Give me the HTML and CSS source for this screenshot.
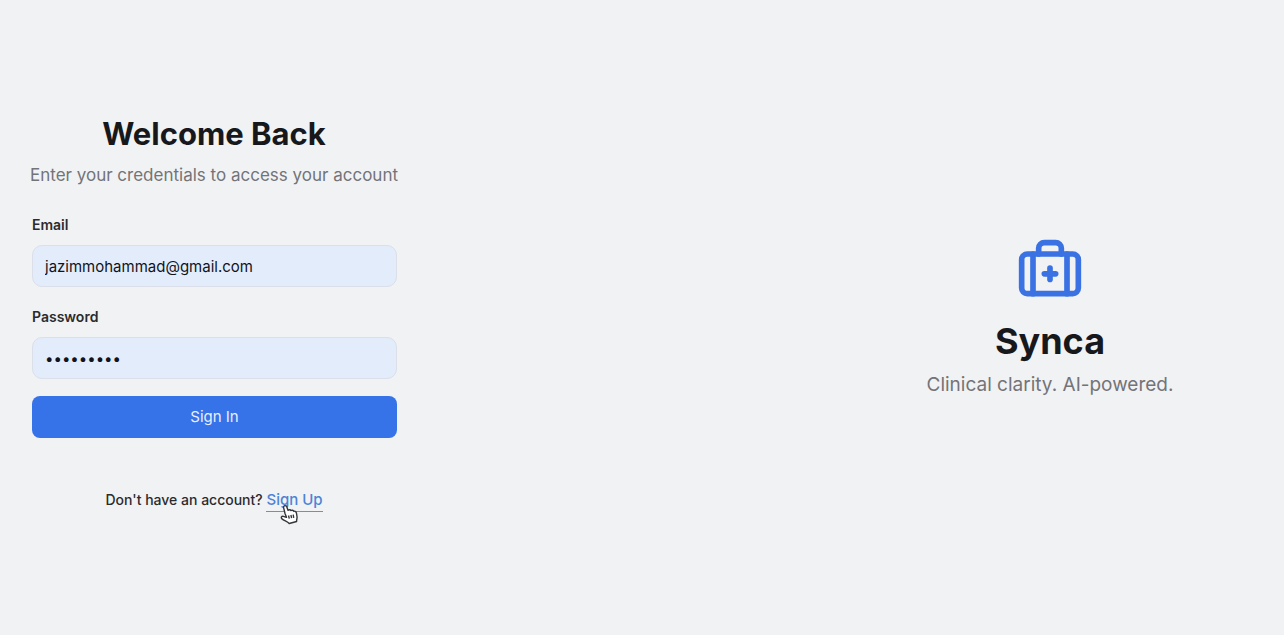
FILE: index.html
```
<!DOCTYPE html>
<html lang="en">
<head>
    <meta charset="UTF-8">
    <meta name="viewport" content="width=device-width, initial-scale=1.0">
    <title>Synca - Sign In</title>
    <link rel="stylesheet" href="styles.css">
</head>
<body>
    <main class="page">
        <section class="login">
            <h1 class="login-title">Welcome Back</h1>
            <p class="login-subtitle">Enter your credentials to access your account</p>
            <form class="login-form">
                <div class="field">
                    <label for="email">Email</label>
                    <input type="email" id="email" value="jazimmohammad@gmail.com">
                </div>
                <div class="field">
                    <label for="password">Password</label>
                    <input type="password" id="password" value="password1">
                </div>
                <button type="submit" class="submit">Sign In</button>
            </form>
            <p class="signup">
                Don't have an account?
                <a href="#" class="signup-link">Sign Up<svg class="pointer" viewBox="0 0 20 22" aria-hidden="true">
                    <path d="M6 10.500 4.600 4.600a1.600 1.600 0 0 1 3.100-.8l1.400 3.600c.6-.9 2.400-.9 2.900.2.7-.7 2.300-.4 2.700.7.900-.5 2.400.1 2.700 1.600l.6 3.600c.3 2-.6 3.300-.4 5l-7.400 2c-1.800-1.900-5-2.800-7.200-4.600-1.400-1.300-.3-3 1.400-2.500l3.100.9z"/>
                    <path d="M9.500 12.500l.8 3.200M11.900 12l.7 3.200M14.200 11.600l.5 3.200"/>
                </svg></a>
            </p>
        </section>
        <section class="brand">
            <svg class="brand-icon" viewBox="0 0 24 24" aria-hidden="true">
                <path d="M12 11v4"/>
                <path d="M14 13h-4"/>
                <path d="M16 6V4a2 2 0 0 0-2-2h-4a2 2 0 0 0-2 2v2"/>
                <path d="M18 6v14"/>
                <path d="M6 6v14"/>
                <rect width="20" height="14" x="2" y="6" rx="2"/>
            </svg>
            <h2 class="brand-name">Synca</h2>
            <p class="brand-tagline">Clinical clarity. AI-powered.</p>
        </section>
    </main>
</body>
</html>
```
FILE: styles.css
```
* {
    box-sizing: border-box;
    margin: 0;
}

body {
    background: #f1f2f4;
    color: #17181b;
    font-family: Inter, "Liberation Sans", sans-serif;
    font-size: 15px;
    line-height: 20px;
}

.page {
    display: grid;
    grid-template-columns: 1fr 1fr 1fr;
    min-height: 100vh;
}

/* Sign in form */
.login {
    display: flex;
    flex-direction: column;
    justify-content: center;
    padding: 0 24px 10px;
    text-align: center;
}

.login-title {
    font-size: 31px;
    line-height: 42px;
    font-weight: 700;
}

.login-subtitle {
    margin-top: 8px;
    color: #737478;
    font-size: 17px;
    line-height: 24px;
}

.login-form {
    display: flex;
    flex-direction: column;
    gap: 20px;
    margin-top: 28px;
    padding: 0 7px 0 8px;
}

.field {
    display: flex;
    flex-direction: column;
    gap: 10px;
    text-align: left;
}

.field label {
    font-size: 14px;
    font-weight: 600;
    color: #2a2b2f;
}

.field input {
    width: 100%;
    height: 42px;
    padding: 0 12px;
    border: 1px solid #dadfea;
    border-radius: 10px;
    background: #e3ecfb;
    color: #10131c;
    font: inherit;
}

.submit {
    height: 42px;
    margin-top: -3px;
    border: none;
    border-radius: 8px;
    background: #3672e8;
    color: #e9effc;
    font: inherit;
    cursor: pointer;
}

.signup {
    margin-top: 50px;
    color: #2a2b2f;
    font-size: 14px;
    font-weight: 500;
    line-height: 24px;
}

.signup-link {
    position: relative;
    display: inline-block;
    border-bottom: 1px solid #6f8fc4;
    color: #4d83d6;
    font-size: 15px;
    line-height: 22px;
    text-decoration: none;
}

.pointer {
    position: absolute;
    left: 13px;
    top: 14px;
    width: 20px;
    height: 22px;
    fill: #fff;
    stroke: #34363c;
    stroke-width: 1.4;
    stroke-linejoin: round;
}

/* Brand panel */
.brand {
    grid-column: 3;
    display: flex;
    flex-direction: column;
    align-items: center;
    justify-content: center;
    padding-right: 40px;
    text-align: center;
}

.brand-icon {
    width: 68px;
    height: 68px;
    fill: none;
    stroke: #3a72e3;
    stroke-width: 2;
    stroke-linecap: round;
    stroke-linejoin: round;
}

.brand-name {
    margin-top: 12px;
    font-size: 36px;
    line-height: 48px;
    font-weight: 700;
}

.brand-tagline {
    margin-top: 6px;
    color: #737478;
    font-size: 19px;
    line-height: 28px;
}
```
